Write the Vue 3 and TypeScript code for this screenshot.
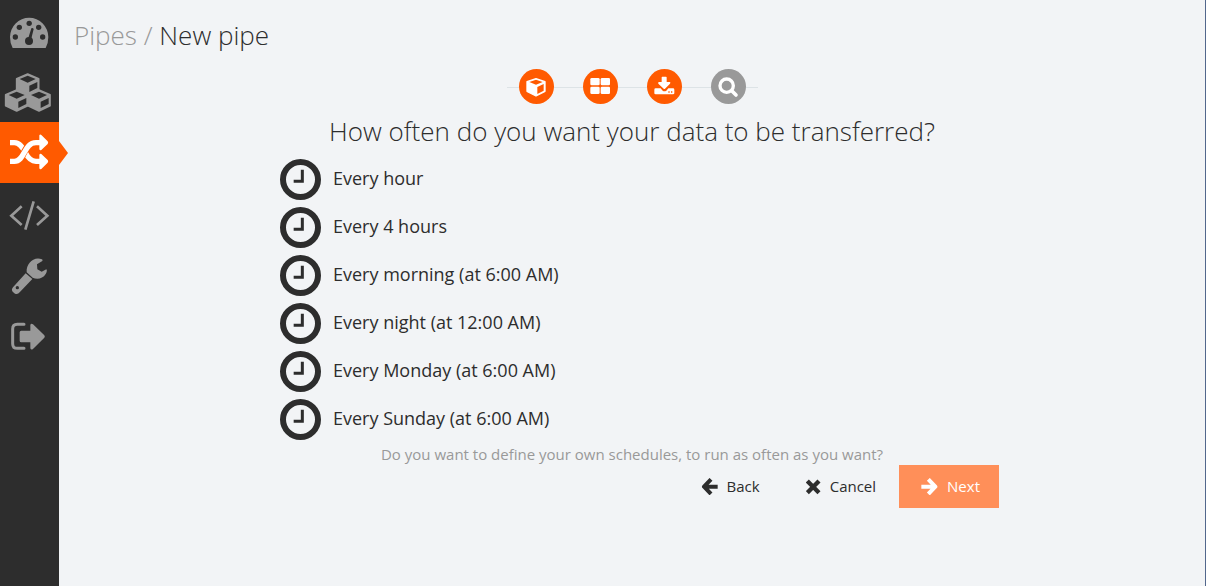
<script setup lang="ts">
import { ref } from 'vue'

interface NavItem {
  id: string
  label: string
}

const navItems: NavItem[] = [
  { id: 'dashboard', label: 'Dashboard' },
  { id: 'datasets', label: 'Data' },
  { id: 'pipes', label: 'Pipes' },
  { id: 'code', label: 'Code' },
  { id: 'settings', label: 'Settings' },
  { id: 'logout', label: 'Log out' },
]

const activeNav = 'pipes'

const steps = [
  { id: 'source', label: 'Source', done: true },
  { id: 'layout', label: 'Layout', done: true },
  { id: 'target', label: 'Target', done: true },
  { id: 'review', label: 'Review', done: false },
]

const schedules: string[] = [
  'Every hour',
  'Every 4 hours',
  'Every morning (at 6:00 AM)',
  'Every night (at 12:00 AM)',
  'Every Monday (at 6:00 AM)',
  'Every Sunday (at 6:00 AM)',
]

const selected = ref<string | null>(null)
</script>

<template>
  <div class="app">
    <nav class="sidebar" aria-label="Main">
      <a
        v-for="item in navItems"
        :key="item.id"
        href="#"
        class="nav-item"
        :class="{ active: item.id === activeNav }"
        :aria-label="item.label"
      >
        <svg viewBox="0 0 177 183" aria-hidden="true">
          <g v-if="item.id === 'dashboard'">
            <path fill="currentColor" d="M38 144 Q30 130 30 111 A57.500 57.500 0 0 1 145 111 Q145 130 137 144 Z" />
            <g class="cut">
              <circle cx="46" cy="111" r="8" />
              <circle cx="58" cy="82" r="8" />
              <circle cx="87.500" cy="70" r="8" />
              <circle cx="116" cy="82" r="8" />
              <circle cx="128" cy="111" r="8" />
              <circle cx="87" cy="123" r="12" />
              <path d="M84 117 L94 85 Q98 82 101 87 L93 120 Z" />
            </g>
          </g>
          <g v-else-if="item.id === 'datasets'">
            <g v-for="(p, i) in [[83, 36], [50, 84], [117, 84]]" :key="i" :transform="`translate(${p[0]} ${p[1]})`">
              <path fill="currentColor" stroke="currentColor" stroke-width="5" stroke-linejoin="round" d="M0 3 L33 17 V50 L0 66 L-33 50 V17 Z" />
              <path class="cut" d="M0 8 L24 18 L0 29 L-24 18 Z M5 38 L29 27 V45 L5 57 Z" />
            </g>
          </g>
          <g v-else-if="item.id === 'pipes'">
            <g fill="none" stroke="currentColor" stroke-width="16">
              <path d="M30 62 H43 C61 62 69 79 76 92 C84 108 92 118 108 118 H122" />
              <path class="gap" d="M56 118 C70 105 77 62 108 60" />
              <path d="M30 118 H43 C75 118 71 62 108 62 H122" />
            </g>
            <path fill="currentColor" d="M118 40 Q120 36 124 39 L143 58 Q146 62 143 66 L124 84 Q119 87 118 81 Z M118 98 Q120 93 124 96 L143 114 Q146 118 143 122 L124 141 Q119 144 118 138 Z" />
          </g>
          <g v-else-if="item.id === 'code'" fill="none" stroke="currentColor" stroke-width="8">
            <path d="M65 70 L34 98 L65 126 M111 70 L142 98 L111 126 M101 55 L76 140" />
          </g>
          <g v-else-if="item.id === 'settings'">
            <path fill="currentColor" d="M77 88 L97 105 L59 145 Q53 153 45 149 L38 143 Q33 137 39 130 Z" />
            <circle class="cut" cx="52" cy="131" r="5" />
            <path fill="currentColor" d="M127 51 L111 61 L112 76 L125 83 L139 76 Q143 80 137 90 C128 105 111 107 98 101 L80 85 C78 59 101 36 126 46 Q129 48 127 51 Z" />
          </g>
          <g v-else>
            <path fill="none" stroke="currentColor" stroke-width="9" stroke-linecap="round" stroke-linejoin="round" d="M72 58 H52 Q38 58 38 72 V116 Q38 130 52 130 H72" />
            <path fill="currentColor" d="M59 82 Q59 77 64 77 H91 V60 Q93 53 99 58 L133 91 Q136 95 133 98 L99 132 Q93 136 91 130 V112 H64 Q59 112 59 107 Z" />
          </g>
        </svg>
      </a>
    </nav>

    <main class="content">
      <h1 class="breadcrumb"><a href="#">Pipes</a> <span class="slash">/</span> New pipe</h1>

      <section class="wizard">
        <ol class="steps">
          <li v-for="step in steps" :key="step.id" class="step" :class="{ done: step.done }" :aria-label="step.label">
            <svg viewBox="0 0 105 105" aria-hidden="true">
              <g v-if="step.id === 'source'">
                <path fill="#fff" stroke="#fff" stroke-width="4" stroke-linejoin="round" d="M51 29 L78 38 V67 L51 81 L24 67 V38 Z" />
                <path class="hole" d="M51 32 L71 39 L51 47 L31 39 Z M55 54 L74 45 V65 L55 75 Z" />
              </g>
              <g v-else-if="step.id === 'layout'" fill="#fff">
                <rect x="22" y="27" width="28" height="22" rx="4" />
                <rect x="53" y="27" width="28" height="22" rx="4" />
                <rect x="22" y="53" width="28" height="22" rx="4" />
                <rect x="53" y="53" width="28" height="22" rx="4" />
              </g>
              <g v-else-if="step.id === 'target'">
                <path fill="#fff" d="M44 25 Q44 23 46 23 H57 Q59 23 59 25 V39 H68 Q72 40 69 44 L54 59 Q52 61 50 59 L34 44 Q32 40 36 39 H44 Z M26 58 H41 L47 65 Q52 69 58 65 L64 58 H78 Q82 58 82 62 V73 Q82 76 78 76 H26 Q22 76 22 73 V62 Q22 58 26 58 Z" />
                <path class="hole" d="M64 67 H68 V71 H64 Z M72 67 H76 V71 H72 Z" />
              </g>
              <g v-else fill="none" stroke="#fff" stroke-linecap="round">
                <circle cx="47" cy="50" r="20" stroke-width="10" />
                <path d="M63 66 L75 78" stroke-width="11" />
              </g>
            </svg>
          </li>
        </ol>

        <h2 class="question">How often do you want your data to be transferred?</h2>

        <ul class="schedules">
          <li v-for="s in schedules" :key="s">
            <button type="button" class="schedule" :aria-pressed="selected === s" @click="selected = s">
              <svg class="clock" viewBox="0 0 123 123" aria-hidden="true">
                <circle cx="61.500" cy="61.500" r="52.500" fill="none" stroke="currentColor" stroke-width="18" />
                <path fill="none" stroke="currentColor" stroke-width="9" d="M67 32 V67 H41" />
              </svg>
              <span>{{ s }}</span>
            </button>
          </li>
        </ul>

        <p class="note"><a href="#">Do you want to define your own schedules, to run as often as you want?</a></p>

        <div class="actions">
          <button type="button" class="action">
            <svg class="arrow" viewBox="0 0 51 51" aria-hidden="true">
              <path fill="none" stroke="currentColor" stroke-width="12" d="M30 4 L9 26 L30 48 M9 26 H50" stroke-linejoin="round" />
            </svg>
            Back
          </button>
          <button type="button" class="action">
            <svg class="cross" viewBox="0 0 45 51" aria-hidden="true">
              <path fill="none" stroke="currentColor" stroke-width="13" d="M4 9 L39 44 M39 9 L4 44" />
            </svg>
            Cancel
          </button>
          <button type="button" class="action next">
            <svg class="arrow" viewBox="0 0 51 51" aria-hidden="true">
              <path fill="none" stroke="currentColor" stroke-width="12" d="M22 4 L43 26 L22 48 M43 26 H1" stroke-linejoin="round" />
            </svg>
            Next
          </button>
        </div>
      </section>
    </main>
  </div>
</template>

<style>
body {
  background: #f2f4f6;
}
</style>

<style scoped>
.app {
  display: flex;
  min-height: 100vh;
  font-family: "Open Sans", "Noto Sans", sans-serif;
  color: #2d2d2d;
  background: #f2f4f6;
}

.sidebar {
  flex: none;
  width: 59px;
  background: #2d2d2d;
}

.nav-item {
  position: relative;
  display: block;
  height: 61px;
  color: #999;
}

.nav-item svg,
.step svg {
  display: block;
  width: 100%;
  height: 100%;
}

.nav-item.active {
  background: #ff5a00;
  color: #fff;
}

.nav-item.active::after {
  content: "";
  position: absolute;
  left: 100%;
  top: 19px;
  border: solid transparent;
  border-width: 12px 0 12px 9px;
  border-left-color: #ff5a00;
}

.cut {
  fill: #2d2d2d;
}

.gap {
  stroke: #ff5a00;
  stroke-width: 20px;
}

.content {
  flex: 1;
  min-width: 0;
  border-right: 1px solid #52678c;
}

.breadcrumb {
  margin: 0;
  padding: 17px 15px 16px;
  font-size: 26px;
  line-height: 36px;
  font-weight: 300;
}

.breadcrumb a,
.slash,
.note a {
  color: #999;
  text-decoration: none;
}

.wizard {
  max-width: 734px;
  margin: 0 auto;
}

.steps {
  position: relative;
  display: flex;
  gap: 29px;
  width: fit-content;
  margin: 0 auto;
  padding: 0 12px;
  list-style: none;
}

.steps::before {
  content: "";
  position: absolute;
  left: 0;
  right: 0;
  top: 50%;
  border-top: 1px solid #dde3e6;
}

.step {
  position: relative;
  width: 35px;
  height: 35px;
  border-radius: 50%;
  background: #999;
}

.step.done {
  background: #ff5a00;
}

.hole {
  fill: #ff5a00;
}

.question {
  margin: 3px 0 0;
  font-size: 26px;
  line-height: 48px;
  font-weight: 300;
  text-align: center;
}

.schedules {
  margin: 0;
  padding: 0 15px;
  list-style: none;
}

button {
  border: 0;
  background: none;
  font-family: inherit;
  color: inherit;
  cursor: pointer;
}

.schedule {
  display: flex;
  align-items: center;
  gap: 12px;
  width: 100%;
  height: 48px;
  padding: 0;
  font-size: 18px;
  line-height: 24px;
  text-align: left;
}

.clock {
  width: 41px;
  height: 41px;
}

.schedule span {
  padding-bottom: 2px;
}

.note {
  margin: 1px 0 0;
  font-size: 15px;
  line-height: 21px;
  text-align: center;
}

.actions {
  display: flex;
  justify-content: flex-end;
}

.action {
  display: flex;
  align-items: center;
  gap: 9px;
  height: 43px;
  padding: 0 23px;
  font-size: 15px;
  line-height: 21px;
}

.arrow {
  width: 17px;
  height: 17px;
}

.cross {
  width: 15px;
  height: 17px;
}

.next {
  padding: 0 19px 0 22px;
  background: #ff8f59;
  color: #fff;
  font-weight: 500;
}
</style>
